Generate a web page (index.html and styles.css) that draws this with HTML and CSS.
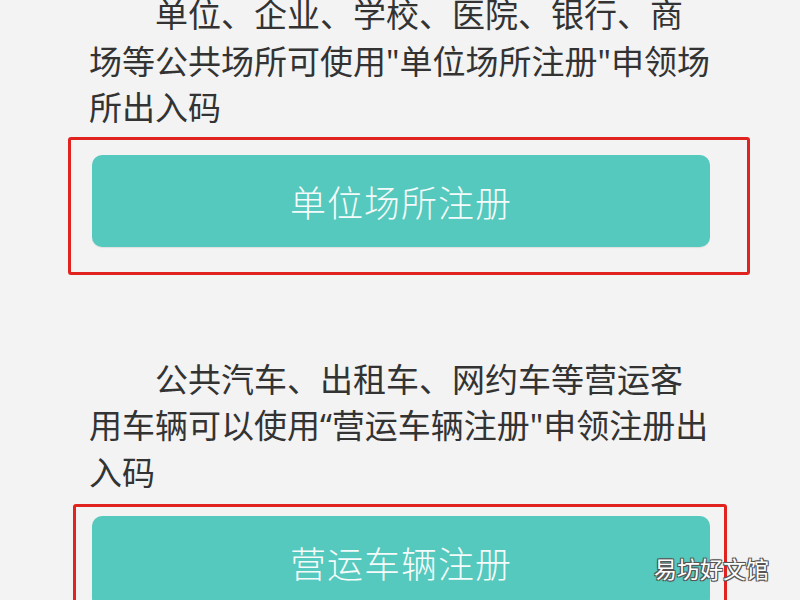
FILE: index.html
```html
<!DOCTYPE html>
<html lang="zh-CN">
<head>
<meta charset="utf-8">
<title>注册</title>
<link rel="stylesheet" href="styles.css">
</head>
<body>
<div class="page">
  <section class="section section--first">
    <p class="desc">单位、企业、学校、医院、银行、商场等公共场所可使用"单位场所注册"申领场所出入码</p>
    <div class="mark mark--first">
      <div class="btn">单位场所注册</div>
    </div>
  </section>
  <section class="section section--second">
    <p class="desc">公共汽车、出租车、网约车等营运客用车辆可以使用“营运车辆注册"申领注册出入码</p>
    <div class="mark mark--second">
      <div class="btn">营运车辆注册</div>
    </div>
  </section>
  <div class="watermark">易坊好文馆</div>
</div>
</body>
</html>
```
FILE: styles.css
```css
html, body {
  margin: 0;
  padding: 0;
  background: #f3f3f3;
}
body {
  font-family: "Noto Sans CJK SC", "Noto Sans", sans-serif;
  color: #333333;
}
.page {
  position: relative;
  width: 800px;
  height: 600px;
  overflow: hidden;
}
.section {
  display: flex;
  flex-direction: column;
}
.section--first {
  margin-top: -8px;
}
.section--second {
  margin-top: 82px;
}
.desc {
  margin: 0 0 0 89px;
  width: 625px;
  font-family: "Noto Sans", "Noto Sans CJK SC", sans-serif;
  font-size: 33px;
  line-height: 46.5px;
  text-indent: 66px;
}
.mark {
  border: 3px solid #e0231f;
  border-radius: 3px;
  box-sizing: border-box;
}
.mark--first {
  margin: 5px 0 0 68px;
  width: 682px;
  padding: 15px 37px 25px 21px;
}
.mark--second {
  margin: 8px 0 0 73px;
  width: 654px;
  padding: 9px 14px 25px 16px;
}
.btn {
  height: 92px;
  background: #55c9bd;
  border-radius: 10px;
  display: flex;
  align-items: center;
  justify-content: center;
  color: #f4fbfa;
  font-size: 36px;
  font-weight: 300;
  letter-spacing: 1px;
  box-shadow: 0 1px 1px rgba(0,0,0,0.08);
}
.watermark {
  position: absolute;
  left: 654px;
  top: 552px;
  font-size: 23px;
  line-height: 32px;
  color: #ffffff;
  text-shadow: -1px -1px 0 #555, 1px -1px 0 #555, -1px 1px 0 #555, 1px 1px 0 #555, 0 0 2px #444;
}
```
